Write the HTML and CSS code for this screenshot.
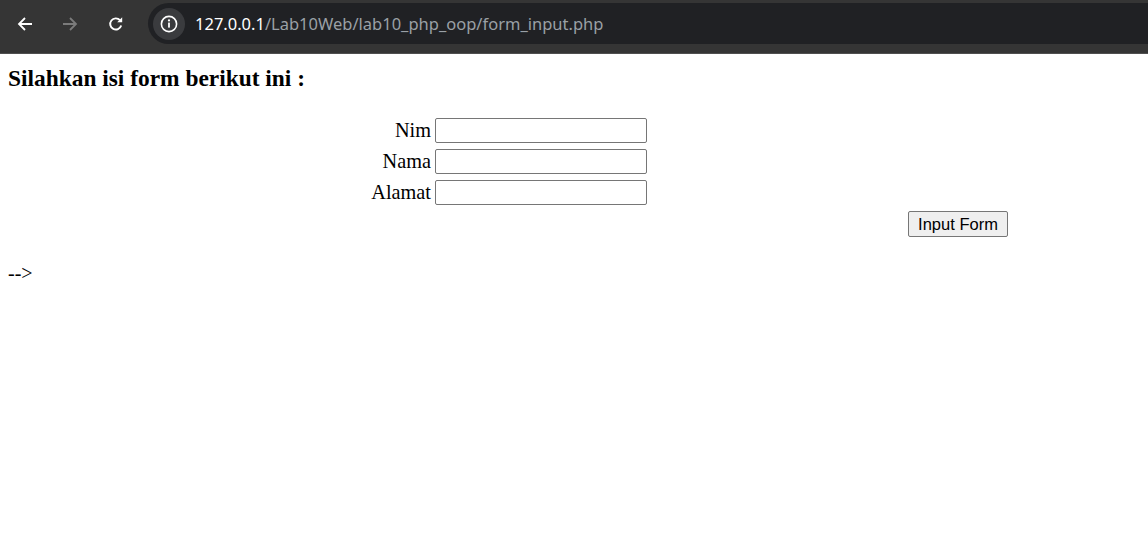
FILE: index.html
```html
<!DOCTYPE html>
<html>
<head>
<meta charset="utf-8">
<title>form_input</title>
<link rel="stylesheet" href="styles.css">
</head>
<body>
<div class="toolbar">
  <div class="nav">
    <span class="navbtn"><svg width="16" height="16" viewBox="0 0 16 16"><path d="M15 8H2.5M8 2L2 8l6 6" fill="none" stroke="#fff" stroke-width="1.8"/></svg></span>
    <span class="navbtn"><svg width="16" height="16" viewBox="0 0 16 16"><path d="M1 8h12.5M8 2l6 6-6 6" fill="none" stroke="#7b7b7b" stroke-width="1.8"/></svg></span>
    <span class="navbtn"><svg width="18" height="18" viewBox="0 0 18 18"><path d="M14.2 10.5A5.6 5.6 0 1 1 13 5.2" fill="none" stroke="#fff" stroke-width="1.9"/><path d="M15.2 2.2v5h-5z" fill="#fff"/></svg></span>
  </div>
  <div class="omnibox">
    <span class="info"><svg width="18" height="18" viewBox="0 0 18 18"><circle cx="9" cy="9" r="7.6" fill="none" stroke="#fff" stroke-width="1.6"/><rect x="8.1" y="7.6" width="1.8" height="5" fill="#fff"/><circle cx="9" cy="5.4" r="1.1" fill="#fff"/></svg></span>
    <span class="url"><span class="host">127.0.0.1</span>/Lab10Web/lab10_php_oop/form_input.php</span>
  </div>
</div>
<div class="page">
  <h3 class="title">Silahkan isi form berikut ini :</h3>
  <form class="form">
    <label class="lbl" for="nim">Nim</label><input class="field" id="nim" type="text"><span></span>
    <label class="lbl" for="nama">Nama</label><input class="field" id="nama" type="text"><span></span>
    <label class="lbl" for="alamat">Alamat</label><input class="field" id="alamat" type="text"><span></span>
    <span></span><span></span><button class="submit" type="button">Input Form</button>
  </form>
  <p class="tail">--&gt;</p>
</div>
</body>
</html>
```
FILE: styles.css
```css
html, body { margin: 0; padding: 0; background: #fff; }
body { font-family: "Liberation Serif", "Times New Roman", serif; color: #000; }

.toolbar {
  height: 50px;
  background: #353535;
  border-bottom: 1px solid #4f4f4f;
  display: flex;
  align-items: flex-start;
  padding-top: 3px;
  box-sizing: content-box;
}
.nav { display: flex; align-items: center; height: 41px; padding-left: 17px; }
.navbtn { width: 45px; height: 41px; display: flex; align-items: center; }
.omnibox {
  flex: 1;
  margin-left: -4px;
  height: 41px;
  background: #202124;
  border-radius: 21px 0 0 21px;
  display: flex;
  align-items: center;
  padding-left: 5px;
}
.info {
  width: 32px; height: 32px; border-radius: 50%;
  background: #3a3b3e;
  display: flex; align-items: center; justify-content: center;
}
.url {
  margin-left: 10px;
  font-family: "Noto Sans", "Open Sans", sans-serif;
  font-size: 16.5px;
  color: #9aa0a6;
}
.host { color: #fff; }

.page { padding: 11px 8px 0 8px; }
.title { margin: 0; font-size: 23.4px; font-weight: bold; line-height: 26px; }
.form {
  width: 868px;
  margin: 27px auto 0;
  display: grid;
  grid-template-columns: 291px 212px 1fr;
  column-gap: 4px;
  row-gap: 6px;
  align-items: center;
}
.lbl { text-align: right; font-size: 20.3px; }
.field {
  height: 25px; width: 212px; box-sizing: border-box;
  border: 1px solid #767676; border-radius: 2px; margin: 0; padding: 1px 2px;
}
.submit {
  justify-self: end;
  width: 100px; height: 26px; margin: 0;
  font-family: "Liberation Sans", Arial, sans-serif; font-size: 16.5px;
  background: #efefef; border: 1px solid #767676; border-radius: 2px; padding: 0;
  color: #000;
}
.tail { margin: 25px 0 0; font-size: 20px; }
```
